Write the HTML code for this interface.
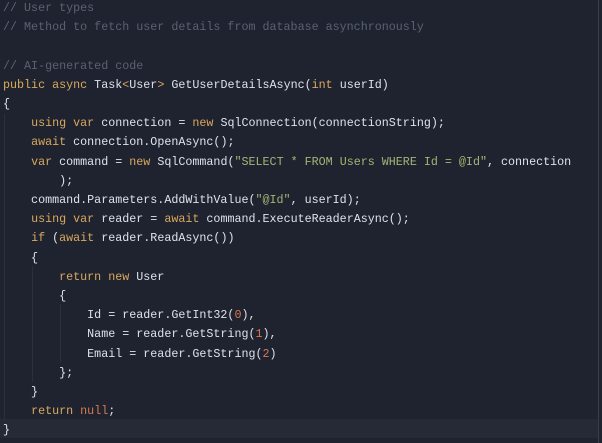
<!DOCTYPE html><html><head><style>
body{margin:0;width:602px;height:443px;background:#1f2330;overflow:hidden;position:relative}
pre{margin:0;position:absolute;left:3px;top:-1px;font-family:"Liberation Mono",monospace;font-size:11.7px;line-height:19.2px;color:#dde2ea;white-space:pre}
.c{color:#5a6170}.k{color:#d9a85c}.s{color:#a7b373}.n{color:#d9784f}
.hl{position:absolute;left:0;top:419px;width:598px;height:19px;background:#262a36}
.g{position:absolute;width:1px;background:#2c303c}
.edge{position:absolute;left:598px;top:0;width:1px;height:443px;background:#3a3e4a}
</style></head><body>
<div class="hl"></div>
<div class="g" style="left:4px;top:114px;height:306px"></div>
<div class="g" style="left:32px;top:266px;height:116px"></div>
<div class="g" style="left:60px;top:304px;height:58px"></div>
<div class="edge"></div>
<pre><span class="c">// User types
// Method to fetch user details from database asynchronously

// AI-generated code</span>
<span class="k">public async</span> Task<span class="k">&lt;</span>User<span class="k">&gt;</span> GetUserDetailsAsync(<span class="k">int</span> userId)
{
    <span class="k">using var</span> connection = <span class="k">new</span> SqlConnection(connectionString);
    <span class="k">await</span> connection.OpenAsync();
    <span class="k">var</span> command = <span class="k">new</span> SqlCommand(<span class="s">"SELECT * FROM Users WHERE Id = @Id"</span>, connection
        );
    command.Parameters.AddWithValue(<span class="s">"@Id"</span>, userId);
    <span class="k">using var</span> reader = <span class="k">await</span> command.ExecuteReaderAsync();
    <span class="k">if</span> (<span class="k">await</span> reader.ReadAsync())
    {
        <span class="k">return new</span> User
        {
            Id = reader.GetInt32(<span class="n">0</span>),
            Name = reader.GetString(<span class="n">1</span>),
            Email = reader.GetString(<span class="n">2</span>)
        };
    }
    <span class="k">return</span> <span class="n">null</span>;
}</pre>
</body></html>
